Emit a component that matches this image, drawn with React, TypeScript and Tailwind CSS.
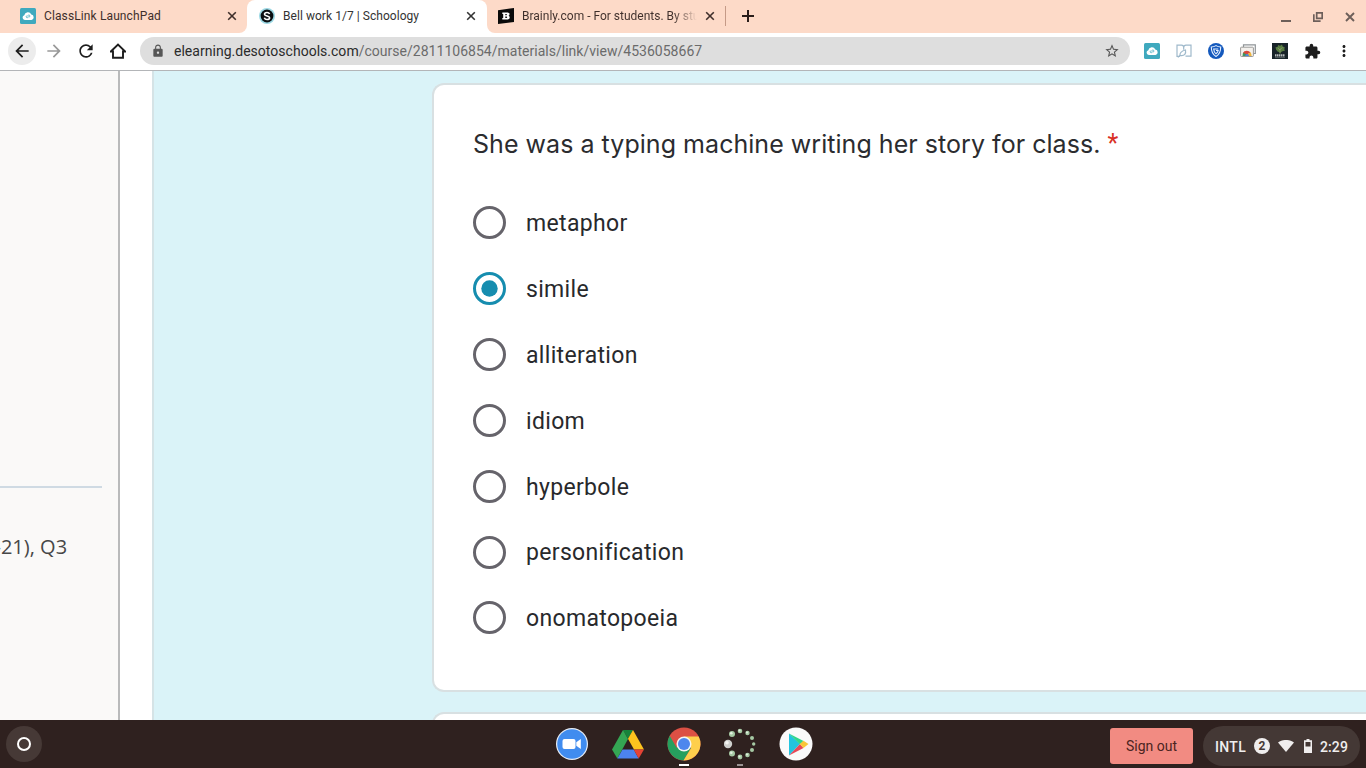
import React from "react";
import {
  MdArrowBack,
  MdArrowForward,
  MdExtension,
  MdLock,
  MdMoreVert,
  MdRefresh,
  MdStarBorder,
} from "react-icons/md";

const options = [
  "metaphor",
  "simile",
  "alliteration",
  "idiom",
  "hyperbole",
  "personification",
  "onomatopoeia",
];

function CloudIcon() {
  return (
    <svg className="size-4 shrink-0" viewBox="0 0 16 16">
      <rect width="16" height="16" rx="1.5" fill="#3fa9be" />
      <path
        d="M4.8 12a2.4 2.4 0 0 1-.5-4.7 3.7 3.7 0 0 1 7-.8 2.8 2.8 0 0 1 .2 5.5z"
        fill="#fff"
      />
      <path
        d="M7.2 8.2l1.2-1a1 1 0 0 1 1.3 1.5l-.8.6M8.8 8.6l-1.2 1a1 1 0 0 1-1.3-1.4l.6-.5"
        fill="none"
        stroke="#3fa9be"
        strokeWidth=".8"
      />
    </svg>
  );
}

function SchoologyIcon() {
  return (
    <svg className="size-4 shrink-0" viewBox="0 0 16 16">
      <circle cx="8" cy="8" r="8" fill="#9bd8e4" />
      <circle cx="8" cy="8" r="6.4" fill="#0b0f12" />
      <path
        d="M10.6 6.1C10.2 5 9.2 4.5 8 4.5c-1.500 0-2.500.7-2.500 1.700 0 2.300 5.100 1.200 5.100 3.500 0 1.100-1.100 1.800-2.600 1.800-1.300 0-2.300-.6-2.700-1.800"
        fill="none"
        stroke="#fff"
        strokeWidth="1.6"
      />
    </svg>
  );
}

function BrainlyIcon() {
  return (
    <svg className="size-4 shrink-0" viewBox="0 0 16 16">
      <path d="M0 2.2L16 0v14L0 16z" fill="#0a0a0a" />
      <path
        d="M4.3 4.4h4.500c1.800 0 2.700.6 2.700 1.800 0 .8-.4 1.300-1 1.600.8.3 1.200.8 1.200 1.700 0 1.400-1.100 2.100-3 2.100H4.300V10h.9V6h-.9zM7.300 6v1.200h1c.9 0 .9-1.200 0-1.200zm0 2.600V10h1.100c1 0 1-1.400 0-1.400z"
        fill="#fff"
        fillRule="evenodd"
      />
    </svg>
  );
}

function TabClose() {
  return (
    <svg className="mx-[2px] size-[10px] shrink-0" viewBox="0 0 10 10">
      <path
        d="M1.2 1.2l7.6 7.6M8.8 1.2L1.2 8.8"
        stroke="currentColor"
        strokeWidth="1.6"
      />
    </svg>
  );
}

function TabStrip() {
  return (
    <div className="flex h-[33px] bg-white text-xs text-[#3f2f2b]">
      <div className="flex w-[247px] items-center rounded-br-lg bg-[#fddac8] pr-[8px] pb-px pl-5">
        <CloudIcon />
        <span className="ml-2 flex-1 whitespace-nowrap tracking-[0.12px]">
          ClassLink LaunchPad
        </span>
        <TabClose />
      </div>
      <div className="w-60 bg-linear-to-b from-[#fddac8] from-50% to-white to-50%">
        <div className="flex h-full items-center rounded-t-lg bg-white pr-[9px] pb-px pl-3 text-[#333]">
          <SchoologyIcon />
          <span className="ml-2 flex-1 whitespace-nowrap tracking-[0.05px]">
            Bell work 1/7 | Schoology
          </span>
          <TabClose />
        </div>
      </div>
      <div className="flex flex-1 rounded-bl-lg bg-[#fddac8]">
        <div className="flex w-[238px] items-center pr-[8px] pb-px pl-[11px]">
          <BrainlyIcon />
          <span className="ml-2 w-[175px] overflow-hidden bg-linear-to-r from-[#3f2f2b] from-86% to-[#fddac8] to-100% bg-clip-text whitespace-nowrap text-transparent">
            Brainly.com - For students. By stu
          </span>
          <span className="ml-[6px]">
            <TabClose />
          </span>
        </div>
        <div className="mt-[6px] h-5 w-px bg-[#c59a87]" />
        <svg className="mt-[10px] ml-[16px] size-3" viewBox="0 0 12 12">
          <path d="M6 0v12M0 6h12" stroke="#2a1d1a" strokeWidth="2" />
        </svg>
        <div className="ml-auto flex items-center pr-[11px] text-[#6d5f5a]">
          <svg className="h-3 w-[10px]" viewBox="0 0 10 12">
            <path d="M0 10h10" stroke="currentColor" strokeWidth="2" />
          </svg>
          <svg className="ml-[22px] size-[10px]" viewBox="0 0 10 10">
            <path
              d="M3.7.8h5.500v5.500H3.700zM.8 2.200v7H7.600"
              fill="none"
              stroke="currentColor"
              strokeWidth="1.7"
            />
          </svg>
          <svg className="ml-[22px] size-[10px]" viewBox="0 0 10 10">
            <path
              d="M1 1l8 8M9 1L1 9"
              stroke="currentColor"
              strokeWidth="1.9"
            />
          </svg>
        </div>
      </div>
    </div>
  );
}

function Extensions() {
  return (
    <div className="ml-[14px] flex shrink-0 items-center gap-4">
      <CloudIcon />
      <svg className="size-4" viewBox="0 0 16 16" fill="none">
        <path
          d="M4 13.300H1V2.200h4.500c1.500 0 2.200.8 2.200 2.200 0-1.400.8-2.200 2.300-2.200h5v11H9.500M7.700 4.400v2.400M2 14.500l2-2.500M4 12.500c-.5-3 1-4.300 5.500-5.500.7 3.500-.7 6.300-5.500 5.500z"
          stroke="#9fb9cb"
          strokeWidth="1.2"
        />
      </svg>
      <svg className="size-4" viewBox="0 0 16 16">
        <circle cx="8" cy="8" r="8" fill="#1459bd" />
        <path
          d="M8 2.600c1.500 1 3 1.400 4.700 1.400 0 4.500-1.200 7.500-4.700 9.400C4.500 11.500 3.300 8.500 3.300 4 5 4 6.500 3.600 8 2.600z"
          fill="none"
          stroke="#e8f1ff"
          strokeWidth="1.1"
        />
        <path
          d="M10.300 6H5.700c.1 2.200.8 3.700 2.300 4.700 1.300-.9 2-1.900 2.200-3.200H8"
          fill="none"
          stroke="#e8f1ff"
          strokeWidth="1.1"
        />
      </svg>
      <svg className="size-4" viewBox="0 0 16 16">
        <path
          d="M3.500 4V1.800h11.800v8.700H13"
          fill="none"
          stroke="#8f9497"
          strokeWidth="1.2"
        />
        <rect
          x=".6"
          y="4.2"
          width="12.8"
          height="9.3"
          rx=".8"
          fill="#f4f1ed"
          stroke="#9b9a98"
        />
        <path d="M2.500 13a4.500 4.500 0 0 1 2.200-4.400L7 11.800 6.500 13z" fill="#43975b" />
        <path d="M3 9.800a4.500 4.500 0 0 1 7.500-.3L7 11.500z" fill="#d9483b" />
        <path d="M10.300 9.300c1 1 1.300 2.300 1.200 3.700H8.300L7 11.500z" fill="#edb53c" />
        <path d="M5.200 13a1.900 1.900 0 0 1 3.800 0z" fill="#4b84dd" />
      </svg>
      <svg className="size-4" viewBox="0 0 16 16">
        <rect width="16" height="16" fill="#182329" />
        <path
          d="M4 6.500L3.500 4.200 5.500 4l.6-2 2 .8L10 1.500l.7 2 2 .8-.4 2 .6 1.500-2.500.5-1.500 1H8.500v1.500h-1V9.200L5.500 8.500z"
          fill="#587d42"
        />
        <path d="M8 10V6M8 7L5.800 5M8 6.500l2.500-2" stroke="#9da778" strokeWidth=".6" />
        <path
          d="M3 12.300h10"
          stroke="#b5bbbb"
          strokeWidth="2.2"
          strokeDasharray="1.5 .5"
        />
        <path d="M3 14.600h10" stroke="#777f82" strokeWidth=".6" />
      </svg>
      <MdExtension className="size-[17px] text-[#1d1d1d]" />
      <MdMoreVert className="-ml-[2px] size-[18px] text-[#1d1d1d]" />
    </div>
  );
}

function Toolbar() {
  return (
    <div className="flex h-[38px] items-center border-b border-[#b3b5b8] bg-white pb-px pl-2 text-[#1d1d1d]">
      <div className="flex size-7 items-center justify-center rounded-full bg-[#ececec]">
        <MdArrowBack className="size-[20px]" />
      </div>
      <MdArrowForward className="ml-2 size-[20px] text-[#999]" />
      <MdRefresh className="ml-3 size-[20px]" />
      <svg className="ml-[14px] size-4" viewBox="0 0 16 16">
        <path
          d="M.8 8.500L8 1.600l7.200 6.900H13v6.300H3V8.500z"
          fill="none"
          stroke="currentColor"
          strokeWidth="1.9"
        />
      </svg>
      <div className="ml-[14px] flex h-7 w-[990px] shrink-0 items-center rounded-full bg-[#dedede] pr-[10px] pl-[11px]">
        <MdLock className="size-[14px] text-[#565656]" />
        <span className="ml-[9px] flex-1 text-sm tracking-[0.02px] text-[#6b6b6b]">
          <span className="text-[#2b2b2b]">elearning.desotoschools.com</span>
          /course/2811106854/materials/link/view/4536058667
        </span>
        <MdStarBorder className="size-4 text-[#555]" />
      </div>
      <Extensions />
    </div>
  );
}

function Radio({ checked }: { checked: boolean }) {
  return (
    <svg className="size-[33px] shrink-0" viewBox="0 0 33 33">
      <circle
        cx="16.5"
        cy="16.5"
        r="15"
        fill="none"
        stroke={checked ? "#168daf" : "#66646b"}
        strokeWidth="3"
      />
      {checked && <circle cx="16.5" cy="16.5" r="8.2" fill="#168daf" />}
    </svg>
  );
}

function Question() {
  return (
    <div className="ml-[278px] h-[609px] rounded-l-xl border-2 border-r-0 border-[#d8e0e2] bg-white pl-[39px]">
      <h1 className="flex pt-[42px] font-[Inter,sans-serif] text-[25px] leading-[34px] tracking-[0.04px] whitespace-nowrap text-[#2b2c2f]">
        She was a typing machine writing her story for class.
        <span className="ml-[7px] font-[Roboto,sans-serif] text-[#d93025]">*</span>
      </h1>
      <div className="mt-[29px]">
        {options.map((option) => (
          <label key={option} className="flex h-[65.85px] items-center">
            <Radio checked={option === "simile"} />
            <span className="ml-[20px] pt-[3px] text-[23px] tracking-[0.33px] text-[#28292c]">
              {option}
            </span>
          </label>
        ))}
      </div>
    </div>
  );
}

function Page() {
  return (
    <main className="flex h-[649px] overflow-hidden bg-white">
      <aside className="h-full w-[120px] shrink-0 border-r-2 border-[#b9babb] bg-[#faf9f8] pt-[415px] font-['Open_Sans',sans-serif]">
        <div className="h-[2px] w-[102px] bg-[#cfdae3]" />
        <p className="-ml-[5.5px] pt-[44px] text-[20px] leading-[30px] whitespace-nowrap text-[#474747]">
          -21), Q3
        </p>
      </aside>
      <section className="ml-8 h-full flex-1 border-l-2 border-[#d5e3e6] bg-[#daf3f8] pt-3">
        <Question />
        <div className="mt-5 ml-[278px] h-20 rounded-l-xl border-2 border-r-0 border-[#d8e0e2] bg-white" />
      </section>
    </main>
  );
}

function Shelf() {
  return (
    <footer className="flex h-12 items-center bg-[#2f211f]">
      <div className="ml-[6px] flex size-9 items-center justify-center rounded-full bg-[#463936]">
        <div className="size-[14px] rounded-full border-2 border-white" />
      </div>
      <div className="ml-[514px] flex gap-6">
        <svg className="size-8" viewBox="0 0 32 32">
          <circle cx="16" cy="16" r="16" fill="#e7edf5" />
          <circle cx="16" cy="16" r="14.8" fill="#408cef" />
          <rect x="6.5" y="11" width="13" height="10" rx="2" fill="#fff" />
          <path d="M20.300 14.300l4.500-3.200v9.800l-4.500-3.200z" fill="#fff" />
        </svg>
        <svg className="size-8" viewBox="0 0 32 32">
          <path d="M11 2h10l-5 8.700z" fill="#16833a" />
          <path d="M11 2L0 21.500 5.300 30.500 16 11z" fill="#34a653" />
          <path d="M21 2L16 10.700l6 10.800h10z" fill="#fcc31e" />
          <path d="M10.500 21.500h11.200l5 9H5.300z" fill="#4c83ee" />
          <path d="M21.700 21.500H32l-5.300 9z" fill="#e54335" />
        </svg>
        <svg className="size-8 overflow-visible" viewBox="0 0 32 32">
          <circle cx="16" cy="16" r="16.5" fill="#dc5044" />
          <path
            d="M1.700 7.750A16.500 16.500 0 0 0 15.500 32.500L23 20 16 16 8.500 19.500z"
            fill="#26a05e"
          />
          <path
            d="M15.500 32.500A16.500 16.500 0 0 0 30.700 8.500H16l7.200 11.500z"
            fill="#fecf4c"
          />
          <circle cx="16" cy="16" r="7.5" fill="#f5f5f5" />
          <circle cx="16" cy="16" r="6" fill="#4d87ed" />
        </svg>
        <svg className="size-8" viewBox="0 0 32 32">
          <circle cx="4" cy="16" r="4.2" fill="#cfd0cd" />
          <circle cx="3" cy="14.8" r="1.8" fill="#f4f4f1" />
          <g fill="#a6c9a4">
            <circle cx="8" cy="6" r="3" />
            <circle cx="16" cy="3" r="2.3" />
            <circle cx="23.5" cy="5" r="2.2" />
            <circle cx="28" cy="10" r="2" />
            <circle cx="29.7" cy="16" r="1.7" />
            <circle cx="28" cy="22" r="2" />
            <circle cx="23.5" cy="27" r="2.3" />
            <circle cx="16" cy="29" r="2.4" />
            <circle cx="8" cy="25.5" r="3" />
          </g>
          <g fill="#e4f1e2">
            <circle cx="7.3" cy="5.2" r="1.3" />
            <circle cx="15.5" cy="2.5" r="1" />
            <circle cx="23" cy="4.5" r="1" />
            <circle cx="23" cy="26.5" r="1" />
            <circle cx="15.5" cy="28.5" r="1" />
            <circle cx="7.3" cy="24.7" r="1.3" />
          </g>
        </svg>
        <svg className="size-8 overflow-visible" viewBox="0 0 32 32">
          <circle cx="16" cy="16" r="16.5" fill="#fafafa" />
          <path d="M9 5.500v22L20 16z" fill="#22c4df" />
          <path d="M9 5.500L23.500 13 20 16.500z" fill="#31d58b" />
          <path d="M9 27.500L23.500 20 20 16z" fill="#e74858" />
          <path d="M23.500 12.700l5 3.300-5 4-3.800-4z" fill="#f9c638" />
        </svg>
      </div>
      <button className="ml-[298px] h-9 w-[83px] translate-y-[2px] rounded-[3px] bg-[#f28b82] text-sm text-[#4b2421]">
        Sign out
      </button>
      <div className="ml-[10px] flex h-10 w-[157px] translate-y-[2px] items-center rounded-full bg-[#443835] pl-3 text-sm font-medium text-[#f0eeee]">
        <span className="w-[39px] pt-px tracking-[0.3px]">INTL</span>
        <span className="flex size-4 items-center justify-center rounded-full bg-[#f0eeee] text-xs font-bold text-[#443835]">
          2
        </span>
        <svg className="ml-2 h-3 w-4" viewBox="0 0 16 12">
          <path d="M0 2.500C4.700-.9 11.300-.9 16 2.500L8 12z" fill="#f0eeee" />
        </svg>
        <svg className="ml-[10px] h-[14px] w-2" viewBox="0 0 8 14">
          <path
            d="M2.500 0h3v1.300H8V14H0V1.300h2.500zM1.500 3v4.500h5V3z"
            fill="#f0eeee"
            fillRule="evenodd"
          />
        </svg>
        <span className="ml-2 pt-px tracking-[0.1px]">2:29</span>
      </div>
      {/* running indicators under the open apps */}
      <div className="absolute top-[764px] left-[679px] h-[2px] w-[10px] bg-white" />
      <div className="absolute top-[764px] left-[737px] h-[2px] w-[6px] bg-[#9b9392]" />
    </footer>
  );
}

export default function App() {
  return (
    <div className="h-[768px] w-[1366px] overflow-hidden bg-white font-[Roboto,sans-serif]">
      <TabStrip />
      <Toolbar />
      <Page />
      <Shelf />
    </div>
  );
}
